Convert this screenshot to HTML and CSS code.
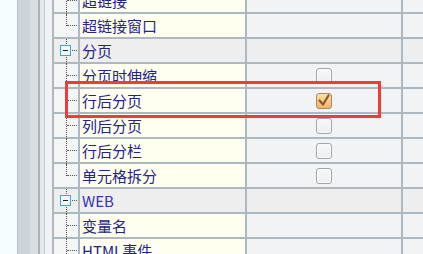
FILE: index.html
```
<!DOCTYPE html>
<html>
<head>
	<title>属性表</title>
	<link rel="stylesheet" href="styles.css">
</head>
<body>
	<div class="frame">
		<div class="sidebar"></div>
		<div class="sheet">
			<div class="grid">
				<div class="row">
					<div class="tree"><span class="line"></span><span class="branch"></span></div>
					<div class="label">超链接</div>
					<div class="value"></div>
					<div class="rest"></div>
				</div>
				<div class="row">
					<div class="tree"><span class="line last"></span><span class="branch"></span></div>
					<div class="label">超链接窗口</div>
					<div class="value"></div>
					<div class="rest"></div>
				</div>
				<div class="row group">
					<div class="tree"><span class="line"></span><span class="toggle"></span><span class="stub"></span></div>
					<div class="label">分页</div>
					<div class="value"></div>
					<div class="rest"></div>
				</div>
				<div class="row">
					<div class="tree"><span class="line"></span><span class="branch"></span></div>
					<div class="label">分页时伸缩</div>
					<div class="value"><span class="check"></span></div>
					<div class="rest"></div>
				</div>
				<div class="row">
					<div class="tree"><span class="line"></span><span class="branch"></span></div>
					<div class="label">行后分页</div>
					<div class="value">
						<span class="check checked">
							<svg width="14" height="14" viewBox="0 0 14 14"><path d="M2.5 6.5 L6 10.5 L11.5 1.5" fill="none" stroke="#8b5634" stroke-width="2.2" stroke-linecap="round" stroke-linejoin="round"/></svg>
						</span>
					</div>
					<div class="rest"></div>
				</div>
				<div class="row">
					<div class="tree"><span class="line"></span><span class="branch"></span></div>
					<div class="label">列后分页</div>
					<div class="value"><span class="check"></span></div>
					<div class="rest"></div>
				</div>
				<div class="row">
					<div class="tree"><span class="line"></span><span class="branch"></span></div>
					<div class="label">行后分栏</div>
					<div class="value"><span class="check"></span></div>
					<div class="rest"></div>
				</div>
				<div class="row">
					<div class="tree"><span class="line last"></span><span class="branch"></span></div>
					<div class="label">单元格拆分</div>
					<div class="value"><span class="check"></span></div>
					<div class="rest"></div>
				</div>
				<div class="row group">
					<div class="tree"><span class="line"></span><span class="toggle"></span><span class="stub"></span></div>
					<div class="label web">WEB</div>
					<div class="value"></div>
					<div class="rest"></div>
				</div>
				<div class="row">
					<div class="tree"><span class="line"></span><span class="branch"></span></div>
					<div class="label">变量名</div>
					<div class="value"></div>
					<div class="rest"></div>
				</div>
				<div class="row">
					<div class="tree"><span class="line"></span><span class="branch"></span></div>
					<div class="label">HTML事件</div>
					<div class="value"></div>
					<div class="rest"></div>
				</div>
			</div>
			<div class="highlight"></div>
		</div>
	</div>
</body>
</html>
```

FILE: styles.css
```
html, body {
	margin: 0;
	padding: 0;
	background-color: #f2f3f4;
}
.frame {
	display: flex;
	height: 254px;
	overflow: hidden;
}
.sidebar {
	width: 52px;
	flex: none;
	background: linear-gradient(to right,
		#f5fcfd 0, #f5fcfd 17px,
		#bcc4cc 17px, #bcc4cc 18px,
		#cdd3db 18px, #cdd3db 30px,
		#d8dde2 30px, #d8dde2 38px,
		#a9b1b9 38px, #a9b1b9 40px,
		#e6e9ec 40px, #e6e9ec 44px,
		#c2c8ce 44px, #c2c8ce 45px,
		#f1f2f3 45px);
}
.sheet {
	position: relative;
	flex: 1;
	border-left: 2px solid #aeb8c0;
}
.grid {
	margin-top: -11px;
	font-family: "Noto Sans CJK SC", "Noto Sans", sans-serif;
	font-size: 15px;
	color: #23238a;
}
.row {
	display: flex;
	height: 25px;
	box-sizing: border-box;
	border-bottom: 2px solid #aeb8c0;
}
.tree {
	position: relative;
	width: 24px;
	flex: none;
	background-color: #f4f5f5;
	border-right: 2px solid #aeb8c0;
}
.label {
	width: 163px;
	flex: none;
	padding-left: 2px;
	background-color: #fffff0;
	border-right: 2px solid #aeb8c0;
	line-height: 23px;
	white-space: nowrap;
	overflow: hidden;
}
.label.web {
	color: #3434b4;
}
.value {
	width: 154px;
	flex: none;
	display: flex;
	align-items: center;
	justify-content: center;
	border-right: 2px solid #aeb8c0;
}
.rest {
	flex: 1;
}
.group .tree,
.group .label,
.group .value,
.group .rest {
	background-color: #eeeeee;
}
.line {
	position: absolute;
	left: 12px;
	top: 0;
	height: 25px;
	border-left: 1px dotted #555;
}
.line.last {
	height: 12px;
}
.branch {
	position: absolute;
	left: 13px;
	top: 11px;
	width: 10px;
	border-top: 1px dotted #555;
}
.stub {
	position: absolute;
	left: 18px;
	top: 11px;
	width: 5px;
	border-top: 1px dotted #555;
}
.toggle {
	position: absolute;
	left: 6px;
	top: 6px;
	width: 9px;
	height: 9px;
	border: 1px solid #3ea6cf;
	background-color: #f4fafc;
}
.toggle::after {
	content: "";
	position: absolute;
	left: 2px;
	top: 4px;
	width: 5px;
	height: 1px;
	background-color: #222;
}
.check {
	display: flex;
	align-items: center;
	justify-content: center;
	width: 14px;
	height: 14px;
	border: 1px solid #9ea7b0;
	border-radius: 3px;
	background: linear-gradient(#f7f8f9, #eceef0);
	box-shadow: inset 0 0 0 1px #f9fafb;
}
.check.checked {
	border-color: #a88a6a;
	background: linear-gradient(#fbe0a8, #f6b560);
	box-shadow: none;
}
.highlight {
	position: absolute;
	left: 11px;
	top: 81px;
	width: 310px;
	height: 31px;
	border: 3px solid #ee3c3c;
}
```
